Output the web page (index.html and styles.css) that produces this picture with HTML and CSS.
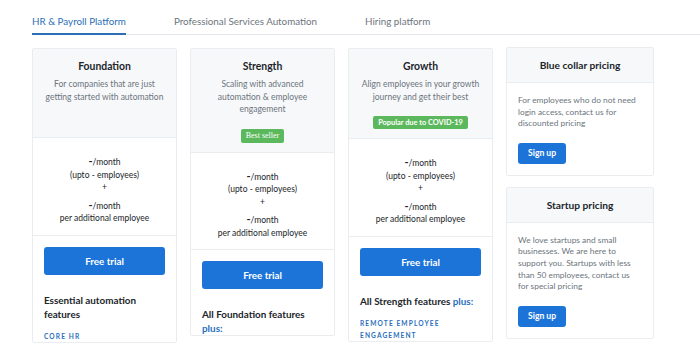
FILE: index.html
```html
<!DOCTYPE html>
<html lang="en">
<head>
  <meta charset="UTF-8">
  <title>Pricing</title>
  <link rel="stylesheet" href="styles.css">
</head>
<body>
  <div class="tabs">
    <a class="tab active">HR &amp; Payroll Platform</a>
    <a class="tab">Professional Services Automation</a>
    <a class="tab">Hiring platform</a>
  </div>

  <div class="plans">
    <div class="plan">
      <div class="plan-head plan-head-short">
        <h3>Foundation</h3>
        <p class="desc">For companies that are just getting started with automation</p>
      </div>
      <div class="price">
        <div><b>-</b>/month</div>
        <div>(upto - employees)</div>
        <div>+</div>
        <div class="price-extra"><b>-</b>/month</div>
        <div>per additional employee</div>
      </div>
      <div class="plan-body">
        <button class="btn-trial">Free trial</button>
        <h4>Essential automation features</h4>
        <div class="feature">CORE HR</div>
      </div>
    </div>

    <div class="plan">
      <div class="plan-head">
        <h3>Strength</h3>
        <p class="desc">Scaling with advanced automation &amp; employee engagement</p>
        <span class="badge badge-serif">Best seller</span>
      </div>
      <div class="price">
        <div><b>-</b>/month</div>
        <div>(upto - employees)</div>
        <div>+</div>
        <div class="price-extra"><b>-</b>/month</div>
        <div>per additional employee</div>
      </div>
      <div class="plan-body">
        <button class="btn-trial">Free trial</button>
        <h4>All Foundation features <span class="plus">plus:</span></h4>
      </div>
    </div>

    <div class="plan">
      <div class="plan-head">
        <h3>Growth</h3>
        <p class="desc">Align employees in your growth journey and get their best</p>
        <span class="badge">Popular due to COVID-19</span>
      </div>
      <div class="price">
        <div><b>-</b>/month</div>
        <div>(upto - employees)</div>
        <div>+</div>
        <div class="price-extra"><b>-</b>/month</div>
        <div>per additional employee</div>
      </div>
      <div class="plan-body">
        <button class="btn-trial">Free trial</button>
        <h4>All Strength features <span class="plus">plus:</span></h4>
        <div class="feature">REMOTE EMPLOYEE ENGAGEMENT</div>
      </div>
    </div>

    <div class="side">
      <div class="side-card">
        <div class="side-head">Blue collar pricing</div>
        <div class="side-body">
          <p>For employees who do not need login access, contact us for discounted pricing</p>
          <button class="btn-signup">Sign up</button>
        </div>
      </div>
      <div class="side-card">
        <div class="side-head">Startup pricing</div>
        <div class="side-body">
          <p>We love startups and small businesses. We are here to support you. Startups with less than 50 employees, contact us for special pricing</p>
          <button class="btn-signup">Sign up</button>
        </div>
      </div>
    </div>
  </div>
</body>
</html>
```

FILE: styles.css
```css
body {
  font-family: 'Lato', 'Open Sans', sans-serif;
  background-color: #fff;
  color: #212529;
  margin: 0;
  padding: 0 0 0 32px;
  overflow: hidden;
}
.tabs {
  display: flex;
  gap: 48px;
  border-bottom: 1px solid #e3e6ea;
  height: 34px;
}
.tab {
  font-size: 9.8px;
  color: #6c757d;
  height: 35px;
  padding-top: 10px;
  box-sizing: border-box;
  line-height: 23px;
}
.tab.active {
  color: #2c6fb7;
  border-bottom: 2px solid #2c6fb7;
}
.plans {
  display: grid;
  grid-template-columns: repeat(4, 145px);
  gap: 13px;
  margin-top: 12px;
  align-items: start;
}
.plan {
  border: 1px solid #eaedf0;
  border-radius: 2px;
  text-align: center;
  margin-top: 1px;
}
.plan-head {
  background-color: #f7f8fa;
  border-bottom: 1px solid #eaedf0;
  padding: 8px 11px 9px;
}
.plan-head-short {
  min-height: 71px;
}
.plan-head h3 {
  margin: 0;
  font-size: 10.4px;
  line-height: 18px;
  font-weight: 700;
}
.desc {
  margin: 3px 0 0;
  font-size: 8.5px;
  line-height: 12.5px;
  color: #6c757d;
}
.badge {
  display: inline-block;
  margin-top: 13px;
  padding: 0 5px;
  font-size: 7.4px;
  line-height: 13px;
  font-weight: 700;
  color: #fff;
  background-color: #5cb85c;
  border-radius: 2px;
}
.badge-serif {
  font-family: 'Liberation Serif', serif;
  font-weight: 400;
  font-size: 8px;
  line-height: 14px;
}
.price {
  padding: 17px 0 10px;
  font-size: 8.5px;
  line-height: 12.5px;
  color: #212529;
  border-bottom: 1px solid #eaedf0;
}
.price b {
  font-size: 11px;
}
.price-extra {
  margin-top: 5px;
}
.plan-body {
  padding: 11px 11px 0;
  text-align: left;
}
.btn-trial {
  display: block;
  width: 100%;
  height: 28px;
  border: none;
  border-radius: 3px;
  background-color: #1c74d9;
  color: #fff;
  font-family: inherit;
  font-size: 9.8px;
  font-weight: 700;
}
.plan-body h4 {
  margin: 18px 0 0;
  font-size: 9.9px;
  line-height: 14px;
  font-weight: 700;
}
.plus {
  color: #2a6fbd;
}
.feature {
  margin-top: 9px;
  font-size: 6.6px;
  line-height: 12px;
  letter-spacing: 1.1px;
  font-weight: 700;
  color: #2a6fbd;
}
.side {
  display: flex;
  flex-direction: column;
  gap: 11px;
}
.side-card {
  border: 1px solid #eaedf0;
  border-radius: 2px;
  width: 146px;
}
.side-head {
  background-color: #f7f8fa;
  border-bottom: 1px solid #eaedf0;
  text-align: center;
  font-size: 10.2px;
  font-weight: 700;
  height: 34px;
  line-height: 34px;
}
.side-body {
  padding: 12px 11px 11px;
}
.side-body p {
  margin: 0 0 13px;
  font-size: 8.4px;
  line-height: 11.6px;
  color: #6c757d;
}
.btn-signup {
  display: block;
  height: 21px;
  padding: 0 10px;
  border: none;
  border-radius: 3px;
  background-color: #1c74d9;
  color: #fff;
  font-family: inherit;
  font-size: 8.6px;
  font-weight: 700;
}
```
